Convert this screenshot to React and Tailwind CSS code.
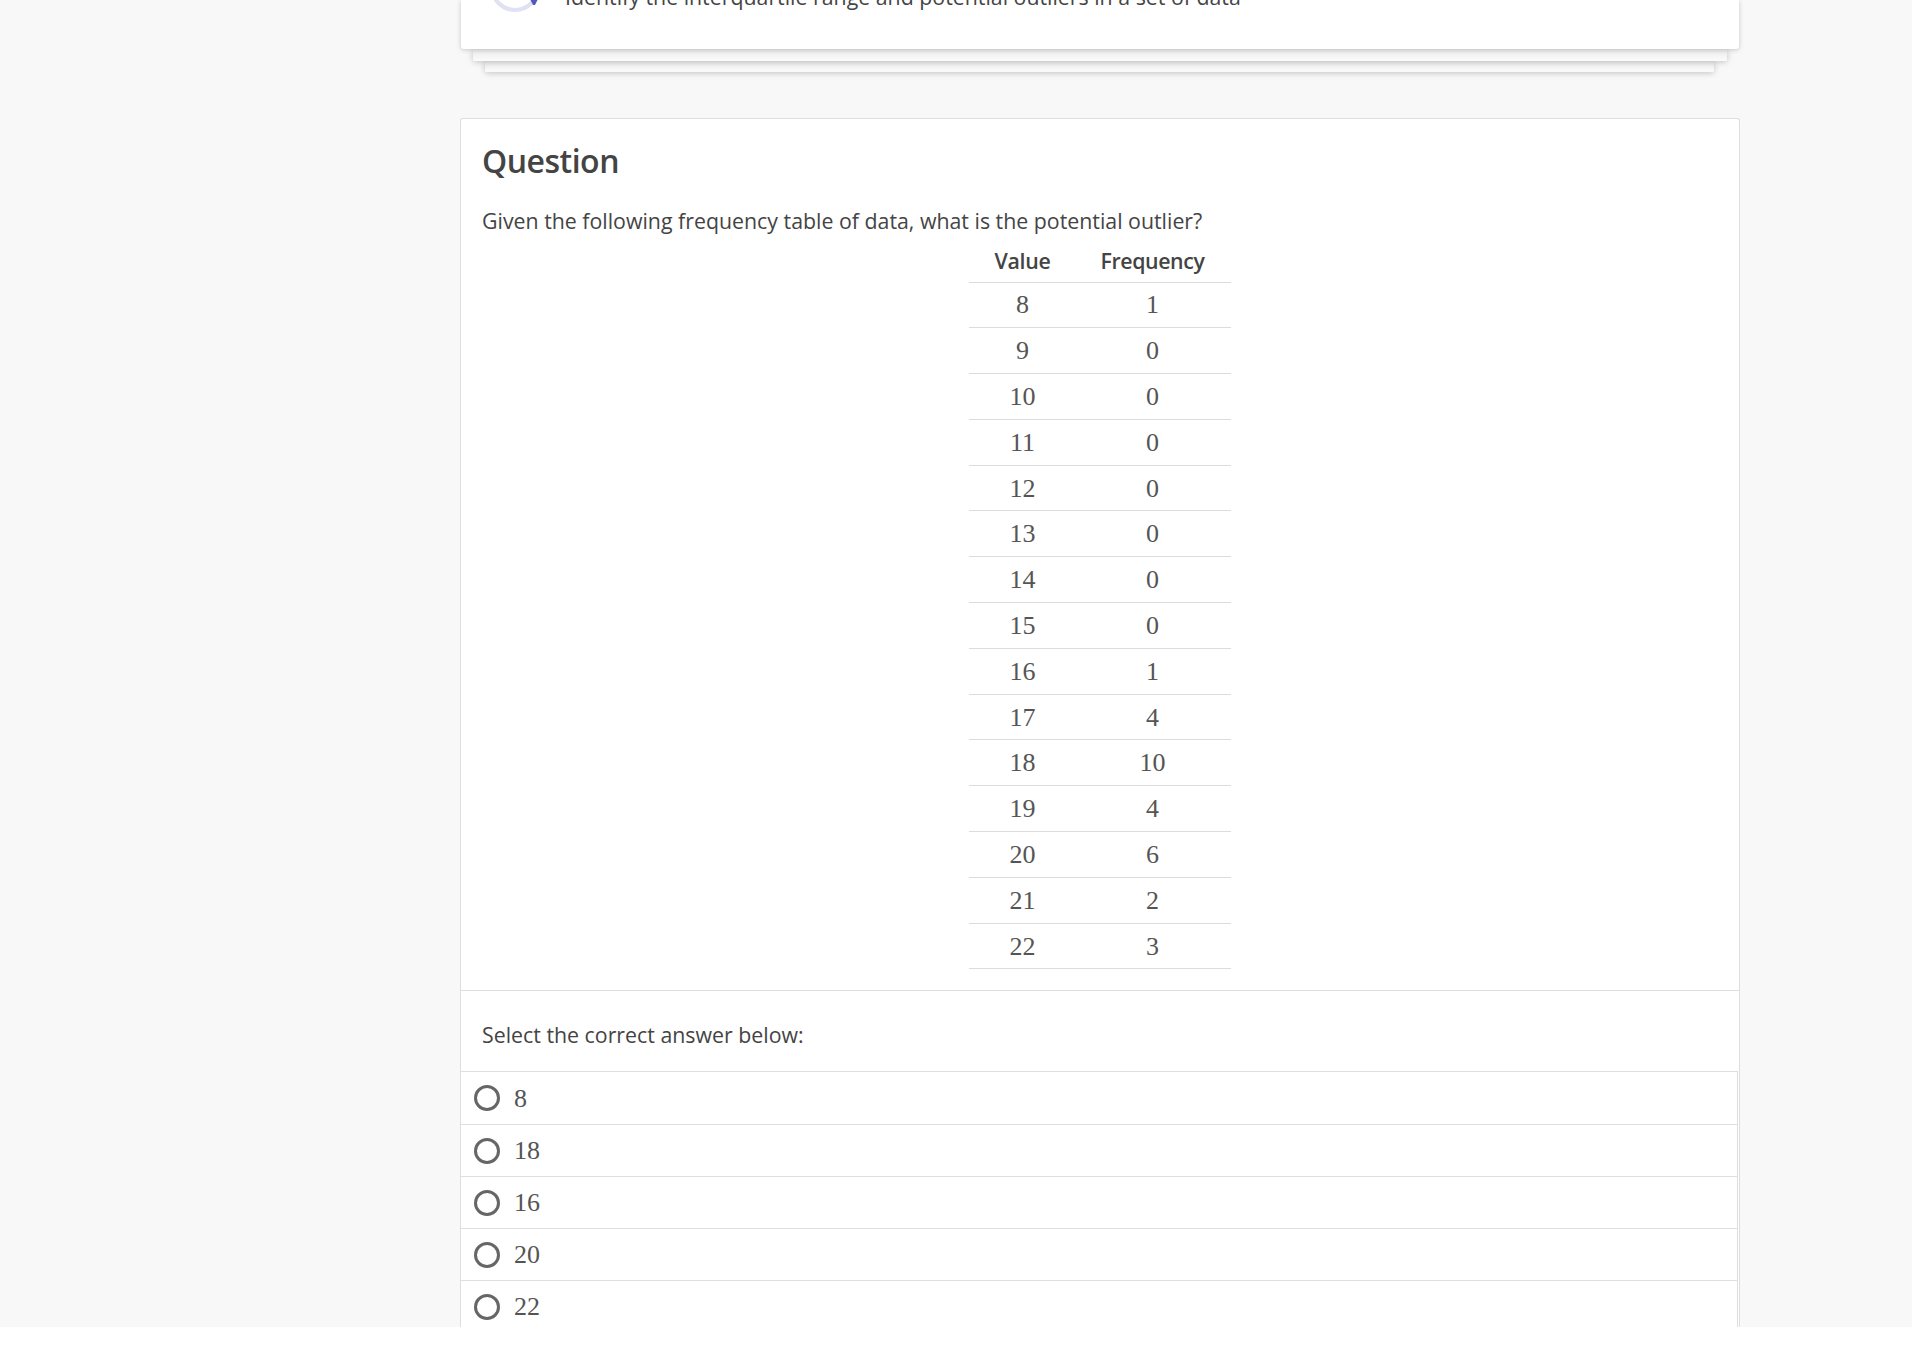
const values = [[8,1],[9,0],[10,0],[11,0],[12,0],[13,0],[14,0],[15,0],[16,1],[17,4],[18,10],[19,4],[20,6],[21,2],[22,3]];
const answers = [8,18,16,20,22];
const sans = "font-['Open_Sans',sans-serif]";
const serif = "font-['Liberation_Serif',serif]";

export default function App() {
  return (
    <div className="h-[1358px] bg-white overflow-hidden">
      <div className={`h-[1327px] overflow-hidden bg-[#f8f8f8] ${sans} text-[#444]`}>
        <div className="w-[1280px] ml-[460px]">
          <div className="flex flex-col h-[72px]">
            <div className="relative z-30 mx-[1px] h-[49px] shrink-0 bg-white rounded-b-[3px] shadow-[0_1px_5px_rgba(0,0,0,0.2)] overflow-hidden flex items-end gap-[25px] pl-[29px] pb-[37px]">
              <svg className="shrink-0" width="50" height="50" viewBox="0 0 50 50">
                <circle cx="25" cy="25" r="23" fill="none" stroke="#e0e1f3" strokeWidth="4" />
                <polygon points="40,37 48,37 45,43 43,43" fill="#5558b8" />
              </svg>
              <div className="text-[21.33px] leading-[29px] mb-[1px] whitespace-nowrap">Identify the interquartile range and potential outliers in a set of data</div>
            </div>
            <div className="relative z-20 mx-[13px] h-[12px] shrink-0 bg-gradient-to-b from-[#ececec] to-[#fbfbfb] rounded-b-[2px] shadow-[0_1px_6px_rgba(0,0,0,0.22)]"></div>
            <div className="relative z-10 ml-[25px] mr-[26px] h-[11px] shrink-0 bg-gradient-to-b from-[#ececec] to-[#fbfbfb] rounded-b-[2px] shadow-[0_1px_6px_rgba(0,0,0,0.22)]"></div>
          </div>

          <div className="mt-[46px] bg-white border border-[#dedede] border-b-0 rounded-t-[3px] pb-[60px]">
            <div className="px-[21px] pt-[20px]">
              <h2 className="text-[32px] leading-[43px] font-semibold tracking-[-0.5px]">Question</h2>
              <p className="mt-[24px] text-[21.33px] leading-[29px]">Given the following frequency table of data, what is the potential outlier?</p>
              <table className="mx-auto mt-[5px] border-collapse w-[262px]">
                <thead>
                  <tr className="border-b border-[#dcdcdc]">
                    <th className="h-[42px] w-[107px] text-[21.33px] font-semibold tracking-[-0.3px] text-center">Value</th>
                    <th className="h-[42px] pr-[2px] text-[21.33px] font-semibold tracking-[-0.4px] text-center">Frequency</th>
                  </tr>
                </thead>
                <tbody className={`${serif} text-[26px] text-[#555]`}>
                  {values.map(([v, f]) => (
                    <tr key={v} className="border-b border-[#dcdcdc]">
                      <td className="h-[45.8px] p-0 text-center">{v}</td>
                      <td className="h-[45.8px] p-0 pr-[2px] text-center">{f}</td>
                    </tr>
                  ))}
                </tbody>
              </table>
            </div>
            <div className="mt-[21px] border-t border-[#dedede] h-[81px] px-[21px] pt-[8px] flex items-center text-[21.33px]">Select the correct answer below:</div>
            <div className="mr-[1px] border-r border-[#dedede]">
              {answers.map((a, i) => (
                <div key={a} className={`${i ? 'h-[52px]' : 'h-[53px]'} flex items-center pl-[13px] border-t border-[#dedede]`}>
                  <span className="w-[26px] h-[26px] rounded-full border-[3px] border-[#666] bg-white"></span>
                  <span className={`ml-[14px] ${serif} text-[26px] text-[#555]`}>{a}</span>
                </div>
              ))}
            </div>
          </div>
        </div>
      </div>
    </div>
  );
}
